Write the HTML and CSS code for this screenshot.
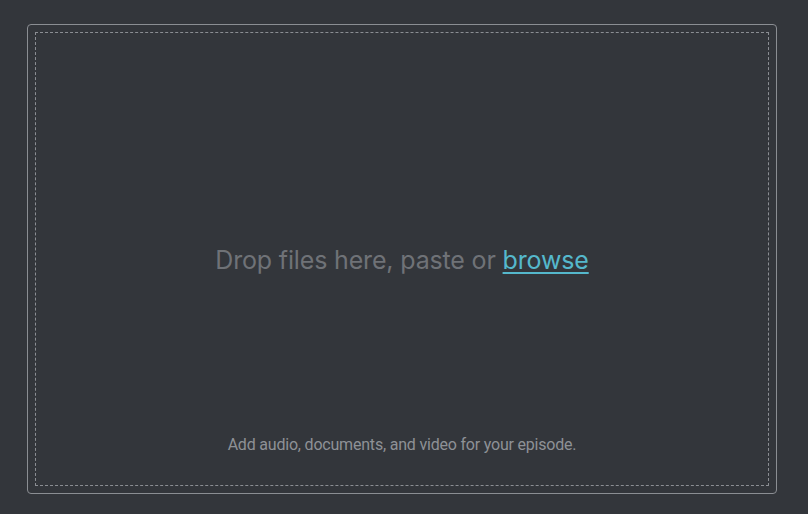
FILE: index.html
```html
<!DOCTYPE html>
<html lang="en">
<head>
<meta charset="utf-8">
<title>Upload</title>
<link rel="stylesheet" href="styles.css">
</head>
<body>
<div class="page">
  <div class="dropzone">
    <div class="dropzone-inner">
      <p class="drop-title">Drop files here, paste or <a class="browse" href="#">browse</a></p>
      <p class="drop-note">Add audio, documents, and video for your episode.</p>
    </div>
  </div>
</div>
</body>
</html>
```
FILE: styles.css
```css
html, body {
  margin: 0;
  padding: 0;
  background: #33363b;
  height: 100%;
}
body {
  font-family: Inter, "Noto Sans", "Liberation Sans", sans-serif;
}
.page {
  padding: 24px 31px 20px 27px;
  box-sizing: border-box;
  height: 514px;
}
.dropzone {
  box-sizing: border-box;
  width: 750px;
  height: 470px;
  border: 1px solid #8b8e93;
  border-radius: 4px;
  padding: 7px;
}
.dropzone-inner {
  box-sizing: border-box;
  height: 100%;
  border: 1px dashed #8b8e93;
  display: grid;
}
.drop-title {
  grid-area: 1 / 1;
  align-self: center;
  justify-self: center;
  margin: 0;
  font-size: 25px;
  letter-spacing: -0.16px;
  line-height: 30px;
  color: #6f7277;
  position: relative;
  top: 1px;
}
.browse {
  color: #55b8cc;
  text-decoration: underline;
  text-decoration-thickness: 2px;
  text-underline-offset: 3px;
}
.drop-note {
  grid-area: 1 / 1;
  align-self: end;
  justify-self: center;
  margin: 0 0 30px;
  font-family: Roboto, "Liberation Sans", sans-serif;
  font-size: 16px;
  letter-spacing: -0.2px;
  line-height: 20px;
  color: #8e9196;
}
```
